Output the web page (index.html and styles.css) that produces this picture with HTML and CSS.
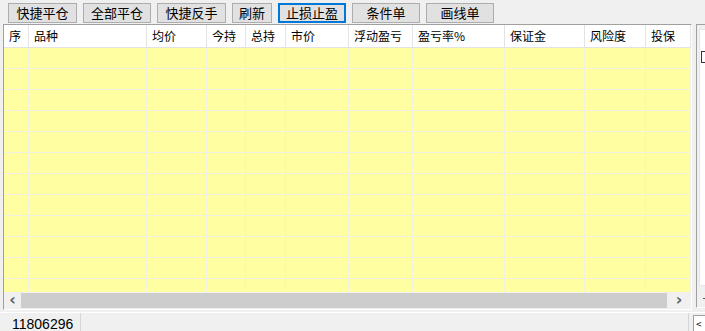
FILE: index.html
```html
<!DOCTYPE html>
<html lang="zh-CN">
<head>
  <meta charset="UTF-8">
  <title>持仓</title>
  <link rel="stylesheet" href="styles.css">
</head>
<body>
  <div class="toolbar">
    <button class="btn w69">快捷平仓</button>
    <button class="btn w68">全部平仓</button>
    <button class="btn w69">快捷反手</button>
    <button class="btn w39">刷新</button>
    <button class="btn w68 focus">止损止盈</button>
    <button class="btn w68">条件单</button>
    <button class="btn w68">画线单</button>
  </div>

  <div class="main">
    <div class="grid-box">
      <div class="grid">
        <div class="row head">
          <div>序</div><div>品种</div><div>均价</div><div>今持</div><div>总持</div><div>市价</div>
          <div>浮动盈亏</div><div>盈亏率%</div><div>保证金</div><div>风险度</div><div>投保</div>
        </div>
        <div class="rows" id="rows"></div>
      </div>
      <div class="hscroll">
        <span class="arrow">&#8249;</span>
        <span class="thumb"></span>
        <span class="arrow">&#8250;</span>
      </div>
    </div>
    <div class="side">
      <div class="side-inner"><span class="check"></span></div>
      <span class="tick"></span>
    </div>
  </div>

  <div class="status">
    <div class="cell">11806296</div>
    <div class="rest"></div>
    <div class="side-btn">&lt;</div>
  </div>

  <script>
    var rows = document.getElementById('rows');
    for (var i = 0; i < 12; i++) {
      var r = document.createElement('div');
      r.className = 'row';
      for (var j = 0; j < 11; j++) r.appendChild(document.createElement('div'));
      rows.appendChild(r);
    }
  </script>
</body>
</html>
```

FILE: styles.css
```css
body {
  margin: 0;
  background: #f0f0f0;
  font-family: "Noto Sans CJK SC", "Microsoft YaHei", sans-serif;
  color: #000;
  width: 705px;
  height: 331px;
  overflow: hidden;
}
.toolbar {
  display: flex;
  padding: 3px 0 0 8px;
  gap: 6px;
  height: 21px;
}
.btn {
  height: 20px;
  padding: 0;
  font-family: inherit;
  font-size: 13px;
  line-height: 16px;
  background: #e1e1e1;
  border: 1px solid #adadad;
  color: #000;
}
.w69 { width: 69px; }
.w68 { width: 68px; }
.w39 { width: 40px; }
.btn.focus {
  border: 2px solid #0078d7;
  line-height: 14px;
}
.main {
  display: flex;
  height: 286px;
}
.grid-box {
  margin-left: 3px;
  width: 687px;
  height: 284px;
  border: 1px solid #a0a0a0;
  border-bottom-color: #ffffff;
  border-right-color: #ffffff;
  background: #f0f0f0;
}
.grid {
  height: 267px;
  overflow: hidden;
}
.row {
  display: grid;
  grid-template-columns: 25px 118px 60px 39px 40px 63px 64px 92px 80px 61px 45px;
  height: 21px;
  background: #ffffa1;
}
.row div {
  border-right: 1px solid #f1f1e2;
  border-bottom: 1px solid #f1f1e2;
}
.row.head {
  height: 23px;
  background: #ffffff;
  font-size: 12px;
  line-height: 22px;
}
.row.head div {
  padding-left: 5px;
  border-right: 1px solid #e3e3e3;
  border-bottom: 1px solid #e3e3e3;
  white-space: nowrap;
  overflow: hidden;
}
.hscroll {
  display: flex;
  height: 16px;
  background: #f0f0f0;
}
.hscroll .arrow {
  width: 17px;
  text-align: center;
  font-family: "DejaVu Sans", sans-serif;
  font-size: 16px;
  font-weight: bold;
  line-height: 15px;
  color: #606060;
}
.hscroll .arrow:last-child {
  width: 24px;
}
.hscroll .thumb {
  flex: 1;
  background: #cdcdcd;
  margin-top: 1px;
}
.side {
  margin-left: 4px;
  width: 9px;
  height: 282px;
  border-top: 1px solid #a0a0a0;
  border-left: 1px solid #a0a0a0;
  border-bottom: 1px solid #ffffff;
  position: relative;
}
.side-inner {
  margin: 4px 0 0 2px;
  height: 255px;
  background: #ffffff;
  border: 1px solid #e6e6e6;
  border-right: 0;
  position: relative;
}
.check {
  position: absolute;
  left: 1px;
  top: 21px;
  width: 8px;
  height: 10px;
  border: 1px solid #333;
  border-right: 0;
}
.tick {
  position: absolute;
  left: 6px;
  top: 273px;
  width: 3px;
  height: 1px;
  background: #555;
}
.status {
  display: flex;
  height: 20px;
  border-top: 1px solid #ffffff;
  margin-top: 2px;
}
.status .cell {
  width: 68px;
  padding-left: 12px;
  border-right: 1px solid #d5d5d5;
  font-family: "Liberation Sans", Arial, sans-serif;
  font-size: 14px;
  line-height: 22px;
}
.status .rest {
  flex: 1;
  border-right: 1px solid #d5d5d5;
}
.side-btn {
  width: 9px;
  margin-left: 4px;
  margin-top: 2px;
  border: 1px solid #a0a0a0;
  border-right: 0;
  background: #ffffff;
  font-size: 10px;
  line-height: 16px;
  padding-left: 2px;
}
```
